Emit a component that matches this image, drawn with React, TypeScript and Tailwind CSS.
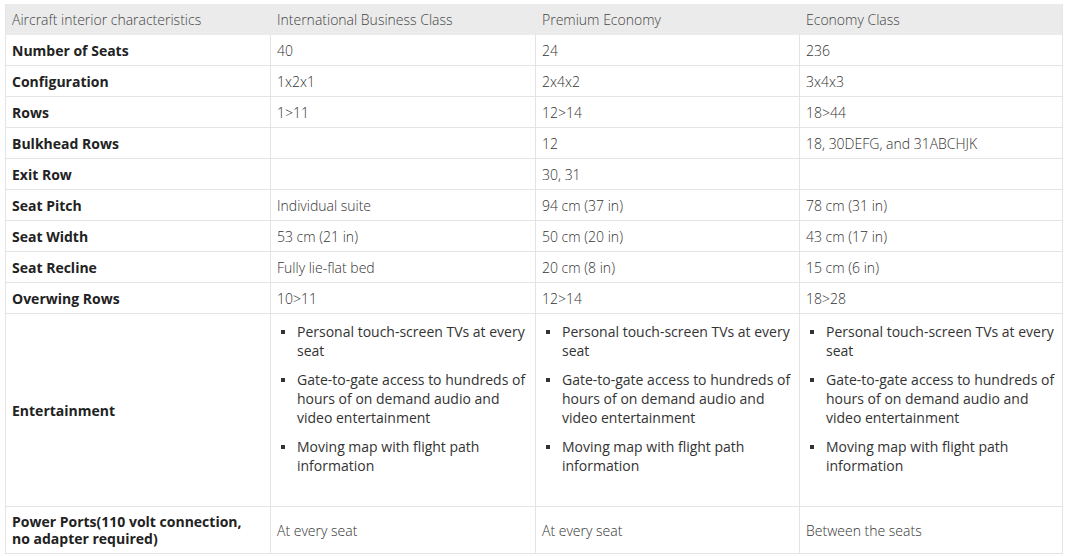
import React from "react";

const cols = "grid grid-cols-[264px_265px_264px_265px]";

const headers = [
  "Aircraft interior characteristics",
  "International Business Class",
  "Premium Economy",
  "Economy Class",
];

const rows: [string, string, string, string][] = [
  ["Number of Seats", "40", "24", "236"],
  ["Configuration", "1x2x1", "2x4x2", "3x4x3"],
  ["Rows", "1>11", "12>14", "18>44"],
  ["Bulkhead Rows", "", "12", "18, 30DEFG, and 31ABCHJK"],
  ["Exit Row", "", "30, 31", ""],
  ["Seat Pitch", "Individual suite", "94 cm (37 in)", "78 cm (31 in)"],
  ["Seat Width", "53 cm (21 in)", "50 cm (20 in)", "43 cm (17 in)"],
  ["Seat Recline", "Fully lie-flat bed", "20 cm (8 in)", "15 cm (6 in)"],
  ["Overwing Rows", "10>11", "12>14", "18>28"],
];

const entertainment = [
  "Personal touch-screen TVs at every seat",
  "Gate-to-gate access to hundreds of hours of on demand audio and video entertainment",
  "Moving map with flight path information",
];

function Bullets() {
  return (
    <ul className="pt-[8px]">
      {entertainment.map((item) => (
        <li key={item} className="flex mb-[10px] leading-[19px]">
          <span className="w-[16px] shrink-0 pt-[8px]">
            <span className="block w-[4px] h-[4px] bg-[#333]"></span>
          </span>
          <span className="text-[#333]">{item}</span>
        </li>
      ))}
    </ul>
  );
}

export default function App() {
  return (
    <div className="w-[1069px] h-[556px] bg-white pt-[4px] pl-[5px] font-['Open_Sans',sans-serif] text-[14px]">
      <div className="w-[1058px] border-l border-r border-[#e4e4e4]">
        <div className={`${cols} h-[31px] bg-[#ebebeb] font-light text-[#444]`}>
          {headers.map((h, i) => (
            <div key={h} className={`flex items-center ${i === 0 ? "pl-[6px]" : "pl-[7px]"}`}>
              {h}
            </div>
          ))}
        </div>

        {rows.map((r) => (
          <div key={r[0]} className={`${cols} h-[31px] border-b border-[#e4e4e4]`}>
            <div className="flex items-center pl-[6px] font-bold text-[#222]">{r[0]}</div>
            {r.slice(1).map((v, i) => (
              <div key={i} className="flex items-center pl-[6px] border-l border-[#e4e4e4] font-light text-[#333]">
                {v}
              </div>
            ))}
          </div>
        ))}

        <div className={`${cols} h-[193px] border-b border-[#e4e4e4]`}>
          <div className="flex items-center pl-[6px] font-bold text-[#222]">Entertainment</div>
          {[0, 1, 2].map((i) => (
            <div key={i} className="pl-[10px] pr-[4px] border-l border-[#e4e4e4]">
              <Bullets />
            </div>
          ))}
        </div>

        <div className={`${cols} h-[47px] border-b border-[#e4e4e4]`}>
          <div className="flex items-center pl-[6px] pr-[20px] font-bold text-[#222] leading-[17px]">
            Power Ports(110 volt connection, no adapter required)
          </div>
          {["At every seat", "At every seat", "Between the seats"].map((v, i) => (
            <div key={i} className="flex items-center pl-[6px] border-l border-[#e4e4e4] font-light text-[#333]">
              {v}
            </div>
          ))}
        </div>
      </div>
    </div>
  );
}
